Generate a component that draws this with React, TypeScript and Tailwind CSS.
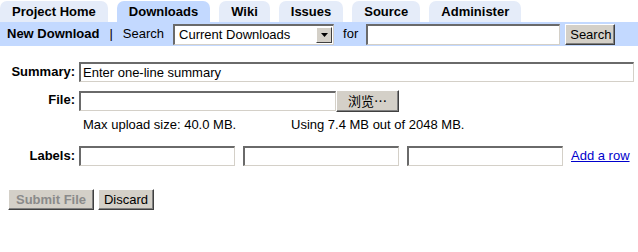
import React from 'react';

const font = "font-['Liberation_Sans',Arial,sans-serif]";
const inset =
  'h-[20px] bg-white border-t-2 border-l-2 border-r border-b border-t-[#6a6a6a] border-l-[#6a6a6a] border-r-[#d4d0c8] border-b-[#d4d0c8] px-[2px] text-[13px] text-black outline-none';
const btn =
  'h-[21px] bg-[#d4d0c8] border border-t-white border-l-white border-r-[#404040] border-b-[#404040] shadow-[inset_-1px_-1px_0_#808080] px-[4px] text-[13px] leading-none';

function Tab({ label, active }: { label: string; active?: boolean }) {
  return (
    <div
      className={`h-[21px] px-[12px] rounded-t-[7px] flex items-center font-bold text-[13px] ${
        active ? 'bg-[#c3d9ff] mt-[1px]' : 'bg-[#e5ecf9] mt-[2px] h-[20px]'
      }`}
    >
      {label}
    </div>
  );
}

export default function App() {
  return (
    <div className={`w-[638px] h-[252px] bg-white text-black ${font}`}>
      {/* Tabs */}
      <div className="flex items-end h-[22px] gap-[9px]">
        <Tab label="Project Home" />
        <Tab label="Downloads" active />
        <Tab label="Wiki" />
        <Tab label="Issues" />
        <Tab label="Source" />
        <Tab label="Administer" />
      </div>

      {/* Sub bar */}
      <div className="h-[24px] bg-[#c3d9ff] flex items-center pl-[7px] text-[13px]">
        <span className="font-bold">New Download</span>
        <span className="ml-[10px] mr-[10px]">|</span>
        <span>Search</span>
        <div className="ml-[9px] w-[161px] h-[21px] bg-white border-t-2 border-l-2 border-r border-b border-t-[#6a6a6a] border-l-[#6a6a6a] border-r-[#d4d0c8] border-b-[#d4d0c8] flex items-center">
          <span className="flex-1 pl-[4px]">Current Downloads</span>
          <div className="w-[16px] h-[16px] mr-[1px] bg-[#d4d0c8] border border-t-white border-l-white border-r-[#404040] border-b-[#404040] flex items-center justify-center">
            <svg width="7" height="4" viewBox="0 0 7 4">
              <path d="M0 0h7L3.5 4z" fill="#000" />
            </svg>
          </div>
        </div>
        <span className="ml-[9px]">for</span>
        <input className={`${inset} ml-[8px] w-[194px] h-[21px]`} />
        <button className={`${btn} ml-[5px] w-[50px]`}>Search</button>
      </div>

      {/* Form */}
      <div className="mt-[16px] grid grid-cols-[75px_1fr] gap-x-[4px] text-[13px]">
        <div className="font-bold text-right h-[20px] leading-[20px]">Summary:</div>
        <div className="pr-[4px]">
          <input className={`${inset} w-full`} defaultValue="Enter one-line summary" />
        </div>

        <div className="font-bold text-right h-[20px] leading-[20px] mt-[7px]">File:</div>
        <div className="mt-[7px] flex items-center">
          <input className={`${inset} w-[257px]`} />
          <button className={`${btn} w-[63px] h-[22px] font-['Noto_Sans_CJK_SC',sans-serif] text-[13px]`}>浏览…</button>
        </div>

        <div />
        <div className="mt-[5px] flex pl-[4px] h-[16px] leading-[16px]">
          <span className="w-[208px]">Max upload size: 40.0 MB.</span>
          <span>Using 7.4 MB out of 2048 MB.</span>
        </div>

        <div className="font-bold text-right h-[20px] leading-[20px] mt-[13px]">Labels:</div>
        <div className="mt-[13px] flex items-center gap-[8px]">
          <input className={`${inset} w-[156px]`} />
          <input className={`${inset} w-[156px]`} />
          <input className={`${inset} w-[156px]`} />
          <a href="#" className="text-[#0000cc] underline">Add a row</a>
        </div>
      </div>

      <div className="mt-[23px] ml-[8px] flex gap-[4px]">
        <button className={`${btn} w-[86px] text-[#8a8a8a] font-bold`}>Submit File</button>
        <button className={`${btn} w-[56px]`}>Discard</button>
      </div>
    </div>
  );
}
